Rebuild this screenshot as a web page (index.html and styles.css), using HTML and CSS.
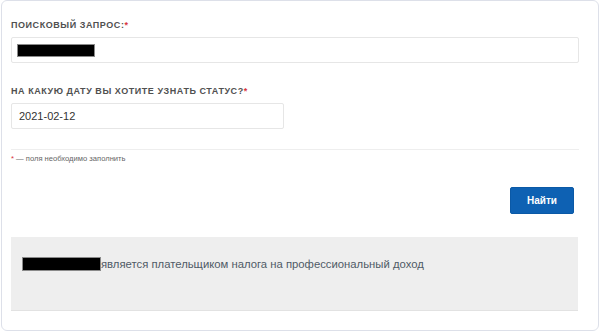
FILE: index.html
```html
<!DOCTYPE html>
<html lang="ru">
<head>
<meta charset="utf-8">
<link rel="stylesheet" href="styles.css">
</head>
<body>
<div class="card">
  <div class="group">
    <div class="label">ПОИСКОВЫЙ ЗАПРОС:<span class="req">*</span></div>
    <div class="input input-wide"><span class="redact redact-input"></span></div>
  </div>
  <div class="group">
    <div class="label">НА КАКУЮ ДАТУ ВЫ ХОТИТЕ УЗНАТЬ СТАТУС?<span class="req">*</span></div>
    <div class="input input-date">2021-02-12</div>
  </div>
  <div class="note"><span class="req">*</span> — поля необходимо заполнить</div>
  <div class="actions"><button class="btn">Найти</button></div>
  <div class="result"><span class="redact redact-result"></span>является плательщиком налога на профессиональный доход</div>
</div>
</body>
</html>
```
FILE: styles.css
```css
html, body {
  margin: 0;
  padding: 0;
  background: #ffffff;
}
body {
  font-family: "Liberation Sans", Arial, sans-serif;
  padding: 0 1px;
}
.card {
  box-sizing: border-box;
  width: 598px;
  height: 331px;
  border: 1px solid #dde0e9;
  border-radius: 6px;
  padding: 18px 18px 0 9px;
}
.group {
  margin-bottom: 22px;
}
.group:nth-of-type(2) {
  margin-bottom: 20px;
}
.label {
  font-size: 9px;
  line-height: 12px;
  font-weight: bold;
  color: #505050;
  letter-spacing: 0.55px;
  margin-bottom: 6px;
}
.req {
  color: #d9363e;
}
.input {
  box-sizing: border-box;
  height: 26px;
  border: 1px solid #e6e6e6;
  border-radius: 2px;
  background: #fff;
  font-size: 11px;
  line-height: 24px;
  color: #333;
  padding: 0 7px;
}
.input-wide {
  width: 568px;
  padding-left: 5px;
  display: flex;
  align-items: center;
}
.input-date {
  width: 273px;
}
.redact {
  display: inline-block;
  background: #000;
  border: 1px solid #8a8a8a;
  box-sizing: border-box;
}
.redact-input {
  width: 78px;
  height: 13px;
}
.note {
  width: 568px;
  border-top: 1px solid #eeeeee;
  padding-top: 4px;
  font-size: 7.6px;
  line-height: 10px;
  color: #666;
}
.actions {
  margin-top: 23px;
  width: 563px;
  display: flex;
  justify-content: flex-end;
}
.btn {
  width: 64px;
  height: 27px;
  border: 1px solid #0b59a6;
  border-radius: 2px;
  background: #0e61b3;
  color: #fff;
  font-family: "Liberation Sans", Arial, sans-serif;
  font-weight: bold;
  font-size: 10px;
  padding: 0;
}
.result {
  box-sizing: border-box;
  margin-top: 23px;
  width: 567px;
  height: 74px;
  background: #eeeeee;
  border-bottom: 1px solid #e2e2e2;
  padding: 20px 11px;
  font-size: 11.3px;
  line-height: 14px;
  color: #4e5a66;
}
.redact-result {
  width: 79px;
  height: 14px;
  vertical-align: -3px;
}
```
